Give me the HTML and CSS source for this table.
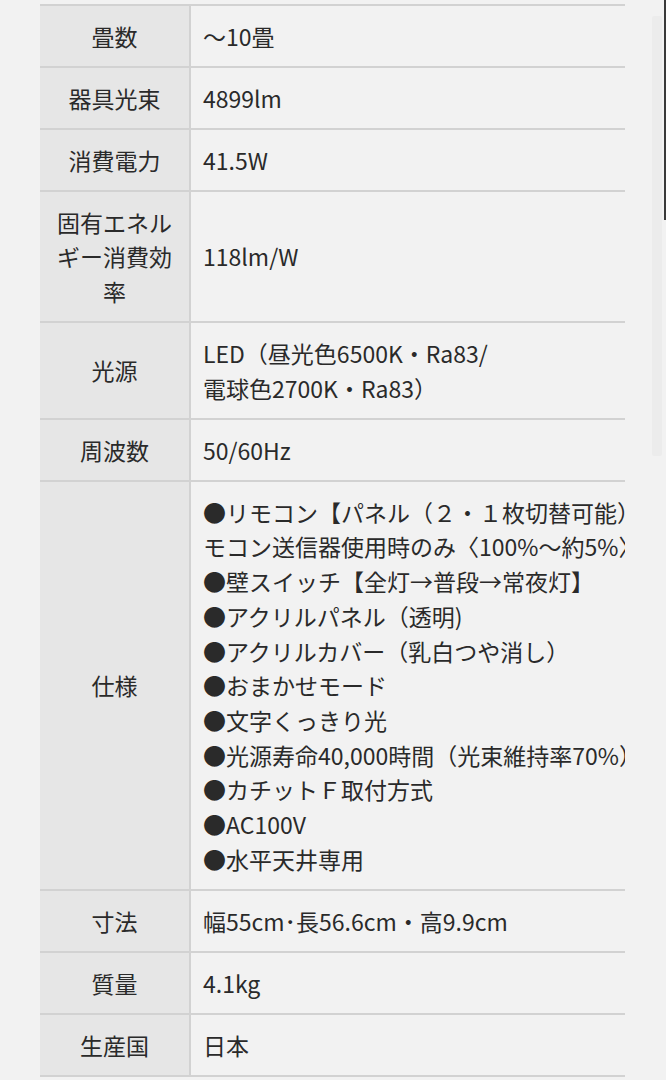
FILE: index.html
```html
<!DOCTYPE html>
<html lang="ja">
<head>
<meta charset="utf-8">
<title>仕様表</title>
<link rel="stylesheet" href="styles.css">
</head>
<body>
<div class="page">
  <div class="spec-wrap">
    <table class="spec">
      <colgroup><col class="c-label"><col class="c-value"></colgroup>
      <tbody>
        <tr><th>畳数</th><td>～10畳</td></tr>
        <tr><th>器具光束</th><td>4899lm</td></tr>
        <tr><th>消費電力</th><td>41.5W</td></tr>
        <tr><th>固有エネルギー消費効率</th><td>118lm/W</td></tr>
        <tr><th>光源</th><td>LED（昼光色6500K・Ra83/<br>電球色2700K・Ra83）</td></tr>
        <tr><th>周波数</th><td>50/60Hz</td></tr>
        <tr><th>仕様</th><td class="nowrap">●リモコン【パネル（２・１枚切替可能）リ<br>モコン送信器使用時のみ〈100%～約5%〉調光】<br>●壁スイッチ【全灯→普段→常夜灯】<br>●アクリルパネル（透明)<br>●アクリルカバー（乳白つや消し）<br>●おまかせモード<br>●文字くっきり光<br>●光源寿命40,000時間（光束維持率70%）<br>●カチットＦ取付方式<br>●AC100V<br>●水平天井専用</td></tr>
        <tr><th>寸法</th><td>幅55cm･長56.6cm・高9.9cm</td></tr>
        <tr><th>質量</th><td>4.1kg</td></tr>
        <tr><th>生産国</th><td>日本</td></tr>
      </tbody>
    </table>
  </div>
  <div class="scroll-thumb"></div>
  <div class="edge"></div>
</div>
</body>
</html>
```
FILE: styles.css
```css
html, body {
  margin: 0;
  padding: 0;
  background: #f2f2f2;
}
body {
  font-family: "Noto Sans CJK JP", "Noto Sans", sans-serif;
  color: #2a2a2a;
}
.page {
  position: relative;
  min-height: 1080px;
  padding-top: 4px;
  box-sizing: border-box;
}
.spec-wrap {
  margin-left: 40px;
  width: 585px;
  overflow: hidden;
}
.spec {
  border-collapse: separate;
  border-spacing: 0;
  table-layout: fixed;
  width: 585px;
  font-size: 23px;
  line-height: 34.7px;
}
.c-label { width: 151px; }
.c-value { width: 434px; }
.spec th, .spec td {
  border-top: 2px solid #d2d2d2;
  padding: 12.7px 12px 12.6px;
  vertical-align: middle;
}
.spec th {
  background: #e6e6e6;
  font-weight: 400;
  text-align: center;
  border-right: 2px solid #d2d2d2;
}
.spec td {
  background: #f2f2f2;
  text-align: left;
}
.spec tr:last-child th, .spec tr:last-child td {
  border-bottom: 2px solid #d2d2d2;
}
.nowrap {
  white-space: nowrap;
}
.scroll-thumb {
  position: absolute;
  top: 16px;
  left: 652px;
  width: 10px;
  height: 440px;
  background: #ececec;
  border-radius: 2px;
}
.edge {
  position: absolute;
  top: 0;
  left: 664px;
  width: 2px;
  height: 220px;
  background: #3a3a3a;
}
```
